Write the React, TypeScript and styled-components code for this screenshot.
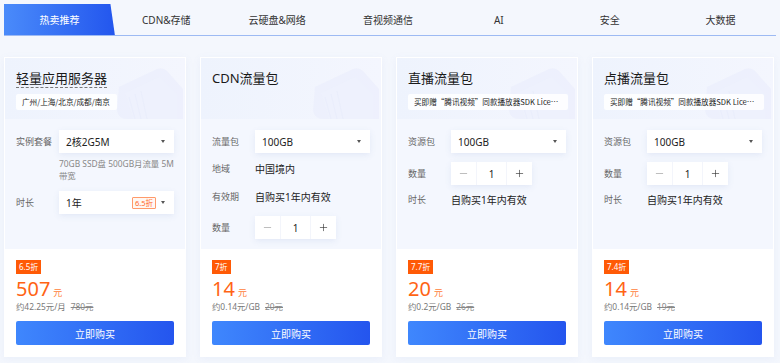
import React from 'react';
import styled, { createGlobalStyle } from 'styled-components';
import { Minus, Plus } from 'lucide-react';

const GlobalStyle = createGlobalStyle`
    html, body {
        margin: 0;
        padding: 0;
        background: #f4f7fd;
    }
    body {
        font-family: "Noto Sans", "Noto Sans CJK SC", sans-serif;
        color: #222;
    }
`;

const Page = styled.div`
    width: 780px;
    height: 363px;
    padding: 4px 4px 0;
    box-sizing: border-box;
    overflow: hidden;
`;

const TabBar = styled.div`
    display: flex;
    height: 31px;
    border-bottom: 1px solid #9dbaf3;
`;

const Tab = styled.div<{ $active?: boolean }>`
    flex: 1;
    display: flex;
    align-items: center;
    justify-content: center;
    font-size: 10px;
    color: ${p => (p.$active ? '#fff' : '#333')};
    background: ${p => (p.$active ? 'linear-gradient(90deg, #4a8bfa 0%, #2356ee 100%)' : 'transparent')};
    clip-path: ${p => (p.$active ? 'polygon(0 0, 96% 0, 100% 100%, 0 100%)' : 'none')};
    margin-right: ${p => (p.$active ? '-4px' : '0')};
`;

const Cards = styled.div`
    display: grid;
    grid-template-columns: repeat(4, 182px);
    column-gap: 14px;
    margin-top: 21px;
`;

const Card = styled.div`
    position: relative;
    height: 300px;
    display: flex;
    flex-direction: column;
    background: #fff;
    border: 1px solid #fff;
    box-sizing: border-box;
    box-shadow: 0 2px 8px rgba(120, 140, 200, 0.08);
    overflow: hidden;
`;

const Header = styled.div`
    position: relative;
    height: 61px;
    padding: 0 11px;
    background: linear-gradient(90deg, #eef3fd 0%, #f4f6fe 100%);
    display: flex;
    flex-direction: column;
    align-items: flex-start;
`;

const Decor = styled.svg`
    position: absolute;
    right: 0;
    bottom: 0;
`;

const Title = styled.div<{ $dotted?: boolean }>`
    position: relative;
    margin-top: 11px;
    font-size: 13px;
    line-height: 18px;
    font-weight: 400;
    color: #1a1a1a;
    border-bottom: ${p => (p.$dotted ? '1px dashed #777' : '1px solid transparent')};
`;

const Tag = styled.div`
    position: relative;
    margin-top: 6px;
    max-width: 160px;
    height: 16px;
    line-height: 16px;
    padding: 0 7px 0 6px;
    box-sizing: border-box;
    background: rgba(255, 255, 255, 0.85);
    border-radius: 2px;
    font-family: "Noto Sans CJK SC", sans-serif;
    font-size: 7.6px;
    color: #222;
    white-space: nowrap;
    overflow: hidden;
    text-overflow: ellipsis;
`;

const Body = styled.div`
    height: 130px;
    padding: 0 11px;
    background: #f4f7fe;
`;

const Row = styled.div<{ $mt: number; $h?: number }>`
    display: flex;
    align-items: center;
    margin-top: ${p => p.$mt}px;
    height: ${p => (p.$h ? `${p.$h}px` : 'auto')};
`;

const Label = styled.div`
    width: 43px;
    flex: none;
    font-size: 9px;
    color: #666;
`;

const Value = styled.div`
    font-size: 10px;
    color: #222;
`;

const Select = styled.div`
    width: 117px;
    height: 23px;
    box-sizing: border-box;
    padding: 0 9px 0 7px;
    display: flex;
    align-items: center;
    gap: 5px;
    background: #fff;
    box-shadow: 0 2px 6px rgba(110, 130, 190, 0.12);
    font-size: 10px;
    color: #222;
`;

const SelectText = styled.span`
    flex: 1;
`;

const Caret = styled.span`
    width: 0;
    height: 0;
    border-left: 2.5px solid transparent;
    border-right: 2.5px solid transparent;
    border-top: 3px solid #555;
`;

const OutlineBadge = styled.span`
    font-size: 7.5px;
    line-height: 10px;
    padding: 0 2px;
    color: #ff6a2b;
    border: 1px solid #ff9a6a;
    border-radius: 1px;
    background: #fff7f2;
`;

const Desc = styled.div`
    margin: 5px 0 0 43px;
    font-size: 8.4px;
    line-height: 12px;
    color: #888;
`;

const Stepper = styled.div`
    display: flex;
    height: 23px;
    background: #fff;
    box-shadow: 0 2px 6px rgba(110, 130, 190, 0.12);
`;

const StepBtn = styled.div<{ $dim?: boolean }>`
    width: 25px;
    display: flex;
    align-items: center;
    justify-content: center;
    color: ${p => (p.$dim ? '#999' : '#333')};
`;

const StepValue = styled.div`
    width: 29px;
    display: flex;
    align-items: center;
    justify-content: center;
    font-size: 10px;
    color: #222;
    border-left: 1px solid #f3f5fb;
    border-right: 1px solid #f3f5fb;
`;

const Footer = styled.div`
    flex: 1;
    padding: 11px 11px 0;
    background: #fff;
    display: flex;
    flex-direction: column;
    align-items: flex-start;
`;

const Discount = styled.div`
    height: 14px;
    line-height: 14px;
    padding: 0 3px;
    background: #ff5a06;
    color: #fff;
    font-size: 8px;
`;

const Price = styled.div`
    margin-top: 2px;
    height: 26px;
    display: flex;
    align-items: baseline;
    gap: 3px;
    color: #ff6414;
    font-size: 20px;
    line-height: 26px;
`;

const Unit = styled.span`
    font-size: 9px;
    color: #ff7d3a;
`;

const Sub = styled.div`
    font-size: 8.4px;
    line-height: 10px;
    color: #777;
    display: flex;
    gap: 5px;
`;

const Strike = styled.span`
    text-decoration: line-through;
    color: #888;
`;

const Buy = styled.div`
    margin-top: 9px;
    width: 100%;
    height: 24px;
    display: flex;
    align-items: center;
    justify-content: center;
    border-radius: 2px;
    background: linear-gradient(90deg, #3f87fd 0%, #2455ee 100%);
    color: #fff;
    font-size: 10px;
`;

const CardDecor = () => (
    <Decor width="80" height="56" viewBox="0 0 80 56">
        <path d="M14 24 L52 6 Q58 4 62 8 L78 26 L78 56 L22 56 Q14 56 12 48 Z" fill="#e9edfb" opacity="0.6" />
        <path d="M20 30 L54 14 L72 32 L72 56 L28 56 Z" fill="#eef1fd" opacity="0.8" />
        <path d="M24 34 L30 56 M30 31 L36 56 M36 28 L42 56" stroke="#e8ecfb" strokeWidth="0.8" />
    </Decor>
);

type Detail = { label: string; value: string; mt: number };

const Sel = ({ text, badge }: { text: string; badge?: string }) => (
    <Select>
        <SelectText>{text}</SelectText>
        {badge && <OutlineBadge>{badge}</OutlineBadge>}
        <Caret />
    </Select>
);

const Step = () => (
    <Stepper>
        <StepBtn $dim><Minus size={11} strokeWidth={1.4} /></StepBtn>
        <StepValue>1</StepValue>
        <StepBtn><Plus size={11} strokeWidth={1.4} /></StepBtn>
    </Stepper>
);

const TextRow = ({ label, value, mt }: Detail) => (
    <Row $mt={mt} $h={20}>
        <Label>{label}</Label>
        <Value>{value}</Value>
    </Row>
);

type FooterProps = { off: string; price: string; per: string; orig: string };

const CardFooter = (p: FooterProps) => (
    <Footer>
        <Discount>{p.off}</Discount>
        <Price>{p.price}<Unit>元</Unit></Price>
        <Sub><span>{p.per}</span><Strike>{p.orig}</Strike></Sub>
        <Buy>立即购买</Buy>
    </Footer>
);

const tabs = ['热卖推荐', 'CDN&存储', '云硬盘&网络', '音视频通信', 'AI', '安全', '大数据'];
const gift = '买即赠“腾讯视频”同款播放器SDK License';

export default function App() {
    return (
        <Page>
            <GlobalStyle />
            <TabBar>
                {tabs.map((t, i) => (
                    <Tab key={t} $active={i === 0}>{t}</Tab>
                ))}
            </TabBar>
            <Cards>
                <Card>
                    <Header>
                        <CardDecor />
                        <Title $dotted>轻量应用服务器</Title>
                        <Tag>广州/上海/北京/成都/南京</Tag>
                    </Header>
                    <Body>
                        <Row $mt={11}>
                            <Label>实例套餐</Label>
                            <Sel text="2核2G5M" />
                        </Row>
                        <Desc>70GB SSD盘 500GB月流量 5M<br />带宽</Desc>
                        <Row $mt={9}>
                            <Label>时长</Label>
                            <Sel text="1年" badge="6.5折" />
                        </Row>
                    </Body>
                    <CardFooter off="6.5折" price="507" per="约42.25元/月" orig="780元" />
                </Card>

                <Card>
                    <Header>
                        <CardDecor />
                        <Title>CDN流量包</Title>
                    </Header>
                    <Body>
                        <Row $mt={11}>
                            <Label>流量包</Label>
                            <Sel text="100GB" />
                        </Row>
                        <TextRow label="地域" value="中国境内" mt={5} />
                        <TextRow label="有效期" value="自购买1年内有效" mt={8} />
                        <Row $mt={10}>
                            <Label>数量</Label>
                            <Step />
                        </Row>
                    </Body>
                    <CardFooter off="7折" price="14" per="约0.14元/GB" orig="20元" />
                </Card>

                <Card>
                    <Header>
                        <CardDecor />
                        <Title>直播流量包</Title>
                        <Tag>{gift}</Tag>
                    </Header>
                    <Body>
                        <Row $mt={11}>
                            <Label>资源包</Label>
                            <Sel text="100GB" />
                        </Row>
                        <Row $mt={9}>
                            <Label>数量</Label>
                            <Step />
                        </Row>
                        <TextRow label="时长" value="自购买1年内有效" mt={4} />
                    </Body>
                    <CardFooter off="7.7折" price="20" per="约0.2元/GB" orig="26元" />
                </Card>

                <Card>
                    <Header>
                        <CardDecor />
                        <Title>点播流量包</Title>
                        <Tag>{gift}</Tag>
                    </Header>
                    <Body>
                        <Row $mt={11}>
                            <Label>资源包</Label>
                            <Sel text="100GB" />
                        </Row>
                        <Row $mt={9}>
                            <Label>数量</Label>
                            <Step />
                        </Row>
                        <TextRow label="时长" value="自购买1年内有效" mt={4} />
                    </Body>
                    <CardFooter off="7.4折" price="14" per="约0.14元/GB" orig="19元" />
                </Card>
            </Cards>
        </Page>
    );
}
